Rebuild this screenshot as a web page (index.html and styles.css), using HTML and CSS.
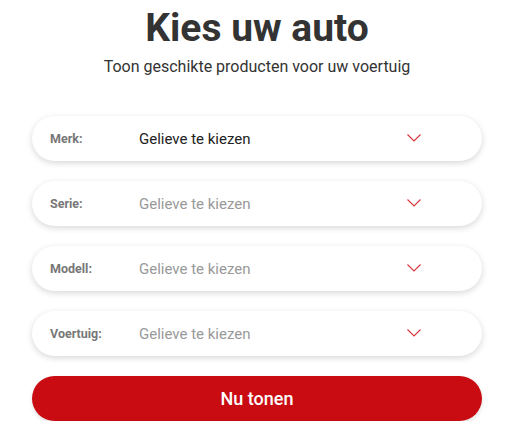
FILE: index.html
```html
<!DOCTYPE html>
<html lang="nl">
<head>
    <meta charset="UTF-8">
    <title>Kies uw auto</title>
    <link rel="stylesheet" href="styles.css">
</head>
<body>
    <div class="car-picker">
        <h1>Kies uw auto</h1>
        <p class="subtitle">Toon geschikte producten voor uw voertuig</p>

        <div class="fields">
            <div class="field">
                <span class="field-label">Merk:</span>
                <span class="field-value active">Gelieve te kiezen</span>
                <svg class="chevron" width="14" height="8" viewBox="0 0 14 8"><path d="M0.5 0.5 L7 7 L13.5 0.5" fill="none" stroke="#d9343b" stroke-width="1.1"/></svg>
            </div>
            <div class="field">
                <span class="field-label">Serie:</span>
                <span class="field-value">Gelieve te kiezen</span>
                <svg class="chevron" width="14" height="8" viewBox="0 0 14 8"><path d="M0.5 0.5 L7 7 L13.5 0.5" fill="none" stroke="#d9343b" stroke-width="1.1"/></svg>
            </div>
            <div class="field">
                <span class="field-label">Modell:</span>
                <span class="field-value">Gelieve te kiezen</span>
                <svg class="chevron" width="14" height="8" viewBox="0 0 14 8"><path d="M0.5 0.5 L7 7 L13.5 0.5" fill="none" stroke="#d9343b" stroke-width="1.1"/></svg>
            </div>
            <div class="field">
                <span class="field-label">Voertuig:</span>
                <span class="field-value">Gelieve te kiezen</span>
                <svg class="chevron" width="14" height="8" viewBox="0 0 14 8"><path d="M0.5 0.5 L7 7 L13.5 0.5" fill="none" stroke="#d9343b" stroke-width="1.1"/></svg>
            </div>
            <button class="show-btn">Nu tonen</button>
        </div>
    </div>
</body>
</html>
```

FILE: styles.css
```css
body {
    margin: 0;
    font-family: Roboto, "Liberation Sans", sans-serif;
    background-color: #fff;
    color: #333;
}
.car-picker {
    padding: 5px 26px 0 32px;
}
h1 {
    margin: 0;
    text-align: center;
    font-size: 39px;
    font-weight: 700;
    line-height: 46px;
    color: #333;
}
.subtitle {
    margin: 6px 0 0;
    text-align: center;
    font-size: 16px;
    line-height: 20px;
    color: #333;
}
.fields {
    margin-top: 39px;
    display: flex;
    flex-direction: column;
    gap: 20px;
    width: 450px;
}
.field {
    height: 45px;
    border-radius: 23px;
    background-color: #fff;
    box-shadow: 0 2px 6px rgba(0,0,0,0.16);
    display: flex;
    align-items: center;
    padding: 0 18px;
}
.field-label {
    width: 89px;
    font-size: 12.5px;
    font-weight: 700;
    color: #777;
}
.field-value {
    flex: 1;
    font-size: 15px;
    color: #999;
}
.field-value.active {
    color: #222;
}
.chevron {
    margin-right: 43px;
    margin-top: -2px;
}
.show-btn {
    height: 45px;
    border: none;
    border-radius: 23px;
    background-color: #c90c12;
    color: #fff;
    font-family: inherit;
    font-size: 18px;
    font-weight: 500;
    box-shadow: 0 2px 4px rgba(0,0,0,0.12);
}
```
